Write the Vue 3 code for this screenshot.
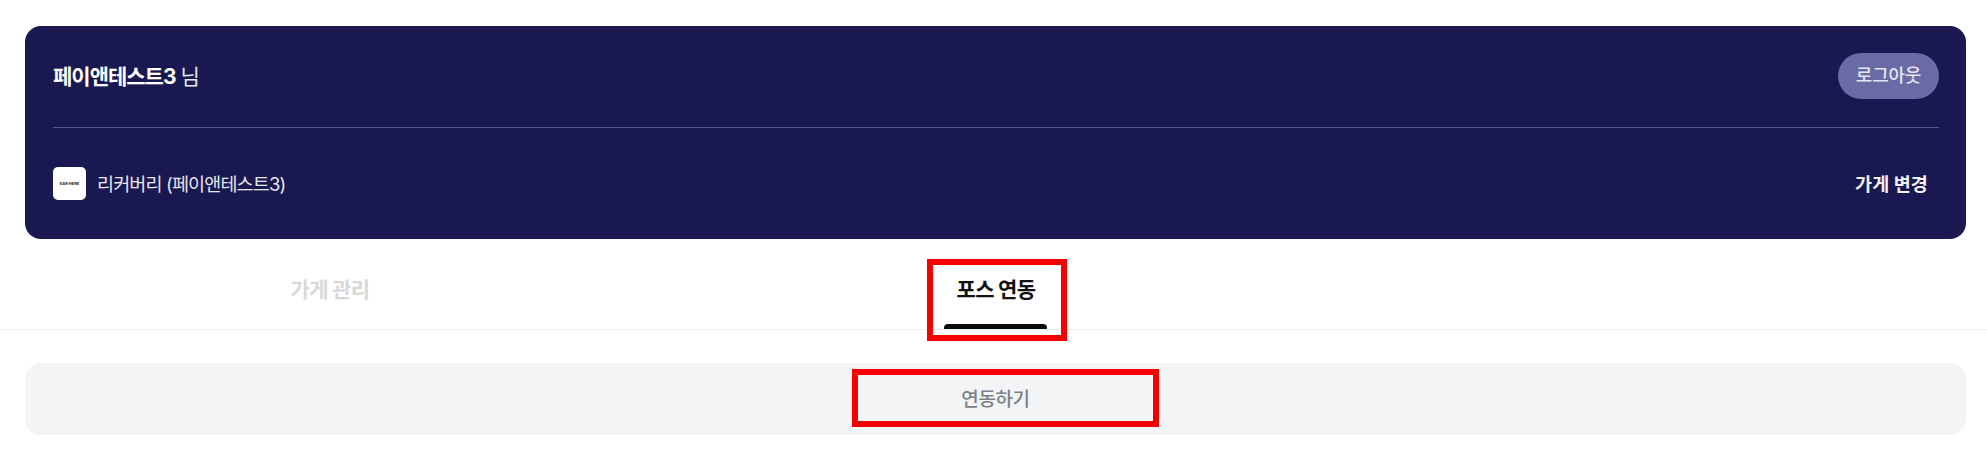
<template>
  <div class="page">
    <section class="card">
      <div class="user-row">
        <p class="user-name"><b>페이앤테스트3</b> 님</p>
        <button class="logout">로그아웃</button>
      </div>
      <div class="store-row">
        <div class="store">
          <span class="logo">EAR HERE</span>
          <span class="store-name">리커버리 (페이앤테스트3)</span>
        </div>
        <button class="change">가게 변경</button>
      </div>
    </section>

    <nav class="tabs">
      <div v-for="tab in tabs" :key="tab.label" class="tab" :class="{ active: tab.active }">
        <span>{{ tab.label }}</span>
        <i v-if="tab.active" class="bar"></i>
        <i v-if="tab.active" class="mark"></i>
      </div>
    </nav>

    <div class="connect">
      <button class="connect-btn">연동하기<i class="mark"></i></button>
    </div>
  </div>
</template>

<script setup>
const tabs = [
  { label: '가게 관리', active: false },
  { label: '포스 연동', active: true },
]
</script>

<style>
html,
body {
  background: #fff;
  overflow: hidden;
}
</style>

<style scoped>
.page {
  width: 1987px;
  height: 456px;
  padding-top: 26px;
  box-sizing: border-box;
  font-family: Inter, "Noto Sans CJK KR", sans-serif;
}

button {
  border: none;
  background: none;
  font-family: inherit;
  padding: 0;
}

.card {
  margin: 0 21px 0 25px;
  height: 213px;
  box-sizing: border-box;
  padding: 0 27px 0 28px;
  background: #191850;
  border-radius: 16px;
  color: #fff;
}

.user-row {
  height: 101px;
  display: flex;
  align-items: center;
  justify-content: space-between;
  border-bottom: 1px solid #57558a;
}

.user-name {
  margin: 0 0 4px;
  font-size: 21px;
  letter-spacing: -1px;
  color: #e8e8f0;
}

.user-name b {
  font-weight: 700;
  color: #fff;
}

.logout {
  width: 101px;
  height: 46px;
  margin-bottom: 1px;
  border-radius: 23px;
  background: #6a6aa6;
  color: #e4e4f2;
  font-size: 18px;
  font-weight: 500;
  letter-spacing: -0.2px;
  line-height: 40px;
}

.store-row {
  height: 111px;
  display: flex;
  align-items: center;
  justify-content: space-between;
}

.store {
  display: flex;
  align-items: center;
  gap: 11px;
}

.logo {
  width: 33px;
  height: 33px;
  border-radius: 5px;
  background: #fff;
  color: #222;
  font-size: 4px;
  font-weight: 700;
  display: flex;
  align-items: center;
  justify-content: center;
  white-space: nowrap;
}

.store-name {
  margin-bottom: 2px;
  font-size: 18.5px;
  letter-spacing: -0.85px;
  color: #e6e6ee;
}

.change {
  margin: 0 11px 2px 0;
  color: #f2f2f8;
  font-size: 18.5px;
  font-weight: 700;
  letter-spacing: 0.1px;
}

.tabs {
  height: 90px;
  display: grid;
  grid-template-columns: 660px 672px 1fr;
  border-bottom: 1px solid #eceef0;
  box-sizing: content-box;
}

.tab {
  position: relative;
  display: flex;
  justify-content: center;
  padding-top: 34px;
  font-size: 21px;
  font-weight: 700;
  letter-spacing: -0.7px;
  color: #d8d8d8;
}

.tab.active {
  color: #111;
}

.bar {
  position: absolute;
  left: 284px;
  bottom: 0;
  width: 103px;
  height: 5px;
  border-radius: 4px 4px 0 0;
  background: #0a0a0a;
}

.tab .mark {
  position: absolute;
  left: 267px;
  top: 20px;
  width: 140px;
  height: 82px;
  box-sizing: border-box;
  border: 6px solid #f40000;
}

.connect {
  margin: 33px 21px 0 25px;
  height: 72px;
  border-radius: 16px;
  background: #f2f4f5;
  display: flex;
  justify-content: center;
  align-items: center;
}

.connect-btn {
  position: relative;
  margin: 0 0 3px 0;
  color: #7d8085;
  font-size: 19px;
  font-weight: 500;
  letter-spacing: -0.4px;
}

.connect-btn .mark {
  position: absolute;
  left: -109px;
  top: -15px;
  width: 307px;
  height: 58px;
  box-sizing: border-box;
  border: 6px solid #f40000;
}
</style>
